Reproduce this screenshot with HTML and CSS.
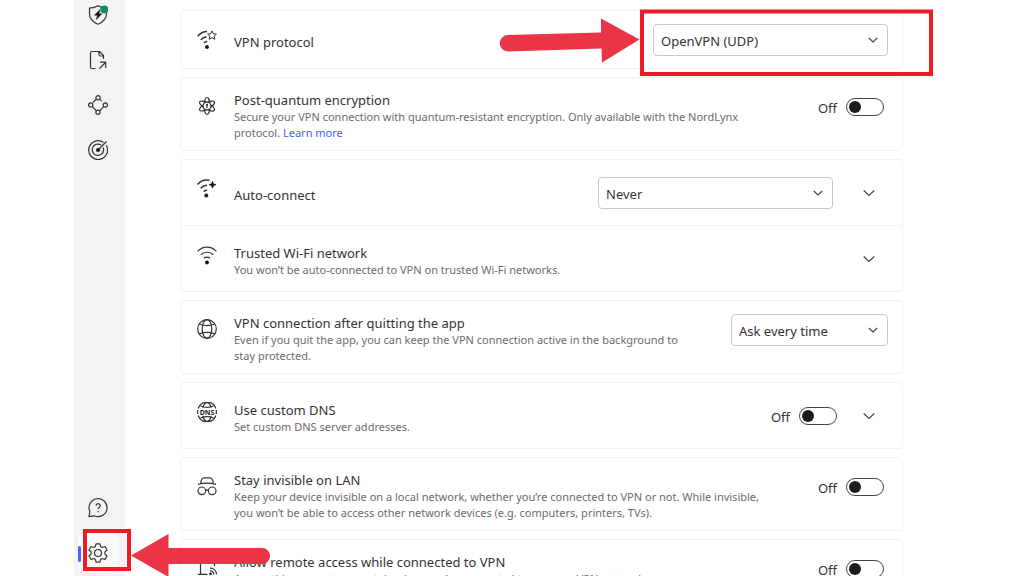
FILE: index.html
```html
<!DOCTYPE html>
<html lang="en">
<head>
    <meta charset="UTF-8">
    <meta name="viewport" content="width=device-width, initial-scale=1.0">
    <title>VPN settings</title>
    <link rel="stylesheet" href="styles.css">
</head>
<body>
    <div class="app">
        <aside class="sidebar">
            <nav class="nav nav-top">
                <button class="nav-item" aria-label="Threat protection">
                    <svg class="icon" viewBox="0 0 20 20">
                        <path d="M10 .8C7.500 2.300 4.500 3 1.500 3.200v5.300c0 5 3.500 8.700 8.500 10.700 5-2 8.500-5.700 8.500-10.700V3.200C15.500 3 12.500 2.300 10 .8z"/>
                        <path class="solid" d="M12 4.500 6.500 10.200h3L8.300 14.500l5.500-5.700h-3z"/>
                        <circle class="status" cx="16.300" cy="4.500" r="4"/>
                    </svg>
                </button>
                <button class="nav-item" aria-label="File sharing">
                    <svg class="icon" viewBox="0 0 20 20">
                        <path d="M7.500 18.500H4A1.500 1.500 0 0 1 2.500 17V3A1.500 1.500 0 0 1 4 1.500h7.500l4 4V9M11 1.500V4.500A1.500 1.500 0 0 0 12.500 6h3M11.500 18.500l6-6M12 12.200h5.700v5.700"/>
                    </svg>
                </button>
                <button class="nav-item" aria-label="Meshnet">
                    <svg class="icon" viewBox="0 0 20 20">
                        <circle cx="10" cy="2.800" r="2.100"/>
                        <circle cx="17.300" cy="10" r="2.100"/>
                        <circle cx="10" cy="17.200" r="2.100"/>
                        <circle cx="2.700" cy="10" r="2.100"/>
                        <path d="M8.300 4.200 5 7.500M11.700 4.200l2 2M4.300 11.600l4 4M15.700 11.600l-4 4"/>
                    </svg>
                </button>
                <button class="nav-item" aria-label="Dark web monitor">
                    <svg class="icon" viewBox="0 0 20 20">
                        <path d="M15.500 2.400A9.400 9.400 0 1 0 18.200 5.300M13.200 5.100A5.700 5.700 0 1 0 15.200 7.600M10 10 18.500 1.500"/>
                        <circle class="solid" cx="10" cy="10" r="1.800"/>
                    </svg>
                </button>
            </nav>
            <nav class="nav">
                <button class="nav-item" aria-label="Help">
                    <svg class="icon" viewBox="0 0 20 20">
                        <path d="M1 18.700 1.900 13.500A9 9 0 1 1 6.200 17.800z"/>
                        <path d="M8 7.800a2.100 2.100 0 1 1 3.200 1.800c-.8.5-1.200.8-1.200 1.700M10 13v1.200"/>
                    </svg>
                </button>
                <button class="nav-item active" aria-label="Settings">
                    <svg class="icon" viewBox="0 0 20 20">
                        <path d="M8 .8h4l.5 2.700 1.800 1 2.700-1 2 3.500-2.100 1.900v2.200l2.100 1.900-2 3.500-2.700-1-1.800 1-.5 2.700H8l-.5-2.700-1.800-1-2.700 1-2-3.500 2.100-1.900V8.900L1 7l2-3.500 2.700 1 1.800-1z"/>
                        <circle cx="10" cy="10" r="3.500"/>
                    </svg>
                </button>
            </nav>
        </aside>

        <main class="settings">
            <section class="card">
                <div class="row row-short">
                    <svg class="icon icon-signal" viewBox="0 0 20 20">
                        <path d="M.8 6.300C3.200 3.300 6 1.700 10 1.600M3.800 9.800C5.500 8 7.200 7 9.500 6.700M6.900 13c1-.9 2-1.300 3.300-1.400"/>
                        <circle class="solid" cx="10" cy="17" r="1.700"/>
                        <path class="thin" d="m15 .9 1.300 2.900 3.100.3-2.300 2.100.7 3.100L15 7.700l-2.800 1.600.7-3.100-2.300-2.100 3.100-.3z"/>
                    </svg>
                    <div class="text">
                        <label class="title" for="protocol">VPN protocol</label>
                    </div>
                    <div class="controls">
                        <div class="dropdown">
                            <select id="protocol">
                                <option>OpenVPN (UDP)</option>
                                <option>OpenVPN (TCP)</option>
                                <option>NordLynx</option>
                            </select>
                            <svg class="chevron" viewBox="0 0 10 10"><path d="m.8 3 4.200 4 4.200-4"/></svg>
                        </div>
                    </div>
                </div>
            </section>

            <section class="card">
                <div class="row row-tall">
                    <svg class="icon" viewBox="0 0 20 20">
                        <ellipse cx="10" cy="10" rx="3" ry="8.500"/>
                        <ellipse cx="10" cy="10" rx="3" ry="8.500" transform="rotate(60 10 10)"/>
                        <ellipse cx="10" cy="10" rx="3" ry="8.500" transform="rotate(120 10 10)"/>
                        <circle class="core" cx="10" cy="10" r="3.900"/>
                        <path d="M10 8.500v3.500"/>
                        <circle class="solid" cx="10" cy="8.800" r=".7"/>
                    </svg>
                    <div class="text">
                        <label class="title" for="quantum">Post-quantum encryption</label>
                        <p class="desc">Secure your VPN connection with quantum-resistant encryption. Only available with the NordLynx protocol. <a href="#">Learn more</a></p>
                    </div>
                    <div class="controls">
                        <span class="state">Off</span>
                        <input class="toggle" type="checkbox" role="switch" id="quantum">
                    </div>
                </div>
            </section>

            <section class="card">
                <div class="row">
                    <svg class="icon icon-signal" viewBox="0 0 20 20">
                        <path d="M.6 5.500C3.600 1.600 8 .2 12.500 1.300M3.600 9.200C5.300 7.400 7.300 6.400 10 6.300M6.700 12.600c1-.9 2-1.300 3.500-1.300"/>
                        <circle class="solid" cx="9.300" cy="16.500" r="1.700"/>
                        <path class="solid" d="m15.500 2.200 1 2.500 2.500 1-2.500 1-1 2.500-1-2.500-2.500-1 2.500-1z"/>
                    </svg>
                    <div class="text">
                        <label class="title" for="autoconnect">Auto-connect</label>
                    </div>
                    <div class="controls">
                        <div class="dropdown">
                            <select id="autoconnect">
                                <option>Never</option>
                                <option>Always</option>
                            </select>
                            <svg class="chevron" viewBox="0 0 10 10"><path d="m.8 3 4.200 4 4.200-4"/></svg>
                        </div>
                        <button class="expand" aria-label="Auto-connect options">
                            <svg class="chevron" viewBox="0 0 12 12"><path d="m.7 3.500 5.300 5 5.300-5"/></svg>
                        </button>
                    </div>
                </div>
                <div class="row">
                    <svg class="icon" viewBox="0 0 20 20">
                        <path d="M.6 6.300C5.800.8 14.200.8 19.400 6.300M3.800 9.800c3.500-3.400 8.900-3.400 12.400 0M7 13.200c1.800-1.400 4.200-1.400 6 0"/>
                        <circle class="solid" cx="10" cy="17.500" r="1.700"/>
                    </svg>
                    <div class="text">
                        <h2 class="title">Trusted Wi-Fi network</h2>
                        <p class="desc">You won’t be auto-connected to VPN on trusted Wi-Fi networks.</p>
                    </div>
                    <div class="controls">
                        <button class="expand" aria-label="Trusted networks">
                            <svg class="chevron" viewBox="0 0 12 12"><path d="m.7 3.500 5.300 5 5.300-5"/></svg>
                        </button>
                    </div>
                </div>
            </section>

            <section class="card">
                <div class="row row-tall">
                    <svg class="icon" viewBox="0 0 20 20">
                        <circle cx="10" cy="10" r="9.300"/>
                        <ellipse cx="10" cy="10" rx="4.800" ry="9.300"/>
                        <path d="M2.500 5.200c4.500 1.600 10.500 1.600 15 0M2.500 14.800c4.500-1.600 10.500-1.600 15 0"/>
                    </svg>
                    <div class="text">
                        <label class="title" for="quitting">VPN connection after quitting the app</label>
                        <p class="desc">Even if you quit the app, you can keep the VPN connection active in the background to stay protected.</p>
                    </div>
                    <div class="controls">
                        <div class="dropdown dropdown-small">
                            <select id="quitting">
                                <option>Ask every time</option>
                                <option>Keep connected</option>
                                <option>Disconnect</option>
                            </select>
                            <svg class="chevron" viewBox="0 0 10 10"><path d="m.8 3 4.200 4 4.200-4"/></svg>
                        </div>
                    </div>
                </div>
            </section>

            <section class="card">
                <div class="row">
                    <svg class="icon" viewBox="0 0 20 20">
                        <path d="M1.200 6.500a9.300 9.300 0 0 1 17.600 0M1.200 13.500a9.300 9.300 0 0 0 17.600 0M.7 8v4M19.300 8v4M5.800 6C6.500 2.800 8 .7 10 .7s3.500 2.100 4.200 5.300M5.800 14c.7 3.200 2.200 5.300 4.200 5.300s3.500-2.100 4.200-5.300M3.500 4c4 1.700 9 1.700 13 0M3.500 16c4-1.700 9-1.700 13 0"/>
                        <text class="dns" x="10" y="12.500">DNS</text>
                    </svg>
                    <div class="text">
                        <label class="title" for="dns">Use custom DNS</label>
                        <p class="desc">Set custom DNS server addresses.</p>
                    </div>
                    <div class="controls">
                        <span class="state">Off</span>
                        <input class="toggle" type="checkbox" role="switch" id="dns">
                        <button class="expand" aria-label="DNS servers">
                            <svg class="chevron" viewBox="0 0 12 12"><path d="m.7 3.500 5.300 5 5.300-5"/></svg>
                        </button>
                    </div>
                </div>
            </section>

            <section class="card">
                <div class="row row-tall">
                    <svg class="icon" viewBox="0 0 20 20">
                        <path d="M1 8.400c5-1.500 13-1.500 18 0M3.700 7.600C4 4 5.300 1.900 7 1.900h6c1.700 0 3 2.100 3.300 5.700M8.600 14.500c.8-.9 2-.9 2.800 0"/>
                        <circle cx="4.800" cy="14.800" r="3.800"/>
                        <circle cx="15.200" cy="14.800" r="3.800"/>
                    </svg>
                    <div class="text">
                        <label class="title" for="lan">Stay invisible on LAN</label>
                        <p class="desc">Keep your device invisible on a local network, whether you’re connected to VPN or not. While invisible, you won’t be able to access other network devices (e.g. computers, printers, TVs).</p>
                    </div>
                    <div class="controls">
                        <span class="state">Off</span>
                        <input class="toggle" type="checkbox" role="switch" id="lan">
                    </div>
                </div>
            </section>

            <section class="card">
                <div class="row row-tall">
                    <svg class="icon" viewBox="0 0 20 20">
                        <path d="M3.500 16V4A1.500 1.500 0 0 1 5 2.500h11A1.500 1.500 0 0 1 17.500 4v4M1 16.300h9.500M13 10.200a6 6 0 0 1 6.500 6.200M13 12.900a3.500 3.500 0 0 1 3.800 3.500"/>
                        <circle class="solid" cx="13.500" cy="15.800" r="1.100"/>
                    </svg>
                    <div class="text">
                        <label class="title" for="remote">Allow remote access while connected to VPN</label>
                        <p class="desc">Access this computer remotely when you’re connected to a secure VPN network.</p>
                    </div>
                    <div class="controls">
                        <span class="state">Off</span>
                        <input class="toggle" type="checkbox" role="switch" id="remote">
                    </div>
                </div>
            </section>
        </main>

        <svg class="marks" width="1024" height="576" viewBox="0 0 1024 576" aria-hidden="true">
            <rect class="frame" x="642" y="11.500" width="289" height="62.500"/>
            <rect class="frame" x="85" y="531" width="44" height="38"/>
            <path class="arrow" d="M508 35 601 32.500V18.500L639.500 39.500 602 62.500 601.500 48.500 508 51.500A8.200 8.200 0 0 1 508 35z"/>
            <path class="arrow" d="M131 555.500 168.500 534V548H262a8 8 0 0 1 0 16H168.500V577z"/>
        </svg>
    </div>
</body>
</html>
```
FILE: styles.css
```css
* {
    box-sizing: border-box;
}
body {
    margin: 0;
    background-color: #fff;
    color: #333;
    font-family: 'Segoe UI', 'Noto Sans', 'Open Sans', sans-serif;
    font-size: 13px;
}
.app {
    position: relative;
    display: flex;
    height: 100vh;
    padding-left: 74px;
    overflow: hidden;
}
.sidebar {
    display: flex;
    flex-direction: column;
    justify-content: space-between;
    flex: none;
    padding: 0 7px 3px 4px;
    background-color: #f3f3f3;
}
.nav {
    display: flex;
    flex-direction: column;
    gap: 5px;
}
/* the list is scrolled a little past its first item */
.nav-top {
    margin-top: -5px;
}
.nav-item {
    position: relative;
    display: flex;
    align-items: center;
    justify-content: center;
    width: 40px;
    height: 40px;
    padding: 0;
    border: none;
    border-radius: 6px;
    background: none;
    cursor: pointer;
}
.nav-item.active {
    background-color: #fafafa;
}
.nav-item.active::before {
    content: '';
    position: absolute;
    left: 0;
    top: 13px;
    width: 3px;
    height: 16px;
    border-radius: 2px;
    background-color: #4a65f5;
}
.icon {
    flex: none;
    width: 20px;
    height: 20px;
    fill: none;
    stroke: #333;
    stroke-width: 1.2;
    stroke-linejoin: round;
}
.icon-signal {
    stroke-width: 1.5;
}
.icon .thin {
    stroke-width: 1;
}
.icon .solid {
    fill: #111;
    stroke: #111;
    stroke-width: 0.5;
}
.icon .status {
    fill: #138a5c;
    stroke: none;
}
.icon .core {
    fill: #fff;
}
.icon .dns {
    fill: #222;
    stroke: none;
    font-size: 7px;
    font-weight: 700;
    text-anchor: middle;
}
.settings {
    display: flex;
    flex: 1;
    flex-direction: column;
    gap: 8px;
    min-width: 0;
    padding: 10px 121px 0 55px;
}
.card {
    flex: none;
    border: 1px solid #f2f2f2;
    border-radius: 4px;
}
.row {
    display: flex;
    align-items: center;
    min-height: 65px;
    padding: 0 14px 0 16px;
}
.row + .row {
    border-top: 1px solid #f2f2f2;
    min-height: 66px;
}
.row-short {
    min-height: 57px;
}
.row-tall {
    align-items: flex-start;
    min-height: 72px;
    padding-top: 13px;
    padding-bottom: 9px;
}
.row .icon {
    align-self: flex-start;
    margin: 19px 17px 0 0;
}
.row-tall .icon {
    margin-top: 5px;
}
.text {
    flex: 1;
    min-width: 0;
    padding-top: 4px;
}
.row-tall .text {
    padding-top: 0;
}
.title {
    display: block;
    margin: 0;
    font-size: 13px;
    font-weight: 400;
    line-height: 18px;
}
.desc {
    max-width: 540px;
    margin: 0;
    color: #6b6b6b;
    font-size: 11px;
    line-height: 16px;
}
.desc a {
    color: #3e5fff;
    text-decoration: none;
}
.controls {
    display: flex;
    align-items: center;
    gap: 9px;
    height: 32px;
    margin-left: 40px;
}
.dropdown {
    position: relative;
    width: 235px;
}
.dropdown-small {
    width: 157px;
}
.dropdown + .expand {
    margin-left: 8px;
}
.dropdown select {
    width: 100%;
    height: 32px;
    padding: 2px 30px 0 7px;
    border: 1px solid #c8c8c8;
    border-radius: 4px;
    background-color: #fff;
    color: #333;
    font-family: inherit;
    font-size: 13px;
    appearance: none;
}
.chevron {
    width: 12px;
    height: 12px;
    fill: none;
    stroke: #444;
    stroke-width: 1.2;
}
.dropdown .chevron {
    position: absolute;
    top: 11px;
    right: 10px;
    width: 10px;
    height: 10px;
    pointer-events: none;
}
.expand {
    display: flex;
    align-items: center;
    justify-content: center;
    width: 38px;
    height: 32px;
    padding: 0;
    border: none;
    background: none;
    cursor: pointer;
}
.state {
    padding-top: 2px;
    font-size: 13px;
}
.toggle {
    display: flex;
    align-items: center;
    width: 38px;
    height: 18px;
    margin: 0 4px 0 0;
    padding: 0 2px;
    border: 1px solid #444;
    border-radius: 9px;
    background-color: #fff;
    appearance: none;
    cursor: pointer;
}
.toggle::before {
    content: '';
    width: 12px;
    height: 12px;
    border-radius: 50%;
    background-color: #1c1c1c;
}
.toggle:checked {
    justify-content: flex-end;
}
/* frames and arrows drawn over the settings */
.marks {
    position: absolute;
    left: 0;
    top: 0;
    pointer-events: none;
}
.marks .frame {
    fill: none;
    stroke: #f01a24;
    stroke-width: 4;
}
.marks .arrow {
    fill: #eb3445;
}
```
